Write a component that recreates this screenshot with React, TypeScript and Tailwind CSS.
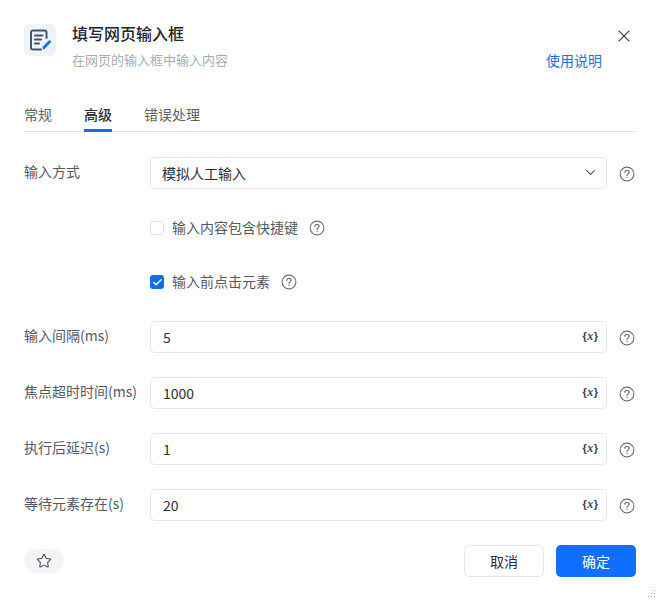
import { ChevronDown, Check, X, Star } from "lucide-react";

function Help() {
  return (
    <svg width="16" height="16" viewBox="0 0 16 16" fill="none" stroke="#6b6f76" className="shrink-0">
      <circle cx="8" cy="8" r="6.9" strokeWidth="1.1" />
      <path d="M5.9 6.3c0-1.2.9-2 2.1-2s2.1.8 2.1 1.9c0 1.6-2.1 1.7-2.1 3.3" strokeWidth="1.2" strokeLinecap="round" />
      <circle cx="8" cy="11.4" r=".7" fill="#6b6f76" stroke="none" />
    </svg>
  );
}

function VarIcon() {
  return (
    <span className="absolute right-[8px] top-0 flex h-full items-center text-[11px] font-bold text-[#3d4350] [font-family:'Liberation_Sans',sans-serif]">
      {"{"}
      <span className="px-[0.5px] italic [font-family:'Liberation_Serif',serif] text-[12px]">x</span>
      {"}"}
    </span>
  );
}

function InputRow({ label, value }: { label: string; value: string }) {
  return (
    <div className="mb-[24px] flex items-center">
      <div className="w-[126px] shrink-0 -translate-y-[2px] text-sm text-[#555a63]">{label}</div>
      <div className="relative flex h-[32px] w-[457px] items-center rounded-[5px] border border-[#e4e6ea] pb-[1px] pl-[12px] text-sm text-[#2b2f36]">
        {value}
        <VarIcon />
      </div>
      <div className="mt-[2px] ml-[12px]">
        <Help />
      </div>
    </div>
  );
}

export default function App() {
  return (
    <div className="relative h-[602px] w-[660px] overflow-hidden bg-white px-[24px] pt-[24px] [font-family:'Noto_Sans_CJK_SC','Liberation_Sans',sans-serif]">
      <div className="flex">
        <div className="flex h-[32px] w-[32px] items-center justify-center rounded-[6px] bg-[#eef4fd]">
          <svg width="26" height="26" viewBox="0 0 26 26" fill="none">
            <path d="M19.5 11V5.5a2 2 0 0 0-2-2H6a2 2 0 0 0-2 2v15a2 2 0 0 0 2 2h8" stroke="#4a5263" strokeWidth="2" strokeLinecap="round" />
            <path d="M8 8.5h7.5M8 12.5h6M8 16.5h4" stroke="#4a5263" strokeWidth="2" strokeLinecap="round" />
            <path d="M16 22.5l-.6-2.6 6-6.2a1.5 1.5 0 0 1 2.2 2.1l-5.9 6.2z" fill="#1f76e8" />
          </svg>
        </div>
        <div className="ml-[16px]">
          <div className="-mt-[2px] text-base leading-[22px] font-medium text-[#22252b]">填写网页输入框</div>
          <div className="mt-[6px] text-[13px] leading-[20px] text-[#a9adb4]">在网页的输入框中输入内容</div>
        </div>
        <div className="ml-auto flex flex-col items-end">
          <X size={20} strokeWidth={1.4} className="mt-[2px] mr-[2px] text-[#4b4f57]" />
          <a className="mt-[4px] mr-[34px] text-sm leading-[20px] text-[#1f6fdc]">使用说明</a>
        </div>
      </div>

      <div className="mt-[33px] flex h-[29px] gap-[32px] border-b border-[#e3e5e8] text-sm">
        <div className="leading-[22px] text-[#5d626b]">常规</div>
        <div className="h-[29px] border-b-[3px] border-[#0f6fe8] leading-[22px] font-medium text-[#2b2f36]">高级</div>
        <div className="leading-[22px] text-[#5d626b]">错误处理</div>
      </div>

      <div className="mt-[25px] flex items-center">
        <div className="w-[126px] shrink-0 -translate-y-[2px] text-sm text-[#555a63]">输入方式</div>
        <div className="flex h-[32px] w-[457px] items-center justify-between rounded-[5px] border border-[#e4e6ea] pr-[8px] pb-[1px] pl-[11px] text-sm text-[#2b2f36]">
          模拟人工输入
          <ChevronDown size={15} strokeWidth={1.8} className="text-[#4b4f57]" />
        </div>
        <div className="mt-[2px] ml-[12px]">
          <Help />
        </div>
      </div>

      <div className="mt-[29px] ml-[126px] flex h-[20px] items-center">
        <span className="h-[14px] w-[14px] rounded-[3px] border border-[#dfe1e5] bg-white"></span>
        <span className="ml-[8px] -translate-y-px text-sm text-[#555a63]">输入内容包含快捷键</span>
        <span className="ml-[11px]"><Help /></span>
      </div>

      <div className="mt-[34px] mb-[29px] ml-[126px] flex h-[20px] items-center">
        <span className="flex h-[14px] w-[14px] items-center justify-center rounded-[3px] bg-[#0f6fe8]">
          <Check size={11} strokeWidth={3.2} className="text-white" />
        </span>
        <span className="ml-[8px] -translate-y-px text-sm text-[#555a63]">输入前点击元素</span>
        <span className="ml-[11px]"><Help /></span>
      </div>

      <InputRow label="输入间隔(ms)" value="5" />
      <InputRow label="焦点超时时间(ms)" value="1000" />
      <InputRow label="执行后延迟(s)" value="1" />
      <InputRow label="等待元素存在(s)" value="20" />

      <div className="mt-[2px] flex items-center">
        <div className="flex h-[24px] w-[40px] items-center justify-center rounded-full bg-[#f3f4f6]">
          <Star size={16} strokeWidth={1.6} className="text-[#4b4f57]" />
        </div>
        <button className="ml-auto h-[32px] w-[80px] rounded-[5px] border border-[#e4e6ea] bg-white pb-[1px] text-sm text-[#2b2f36]">取消</button>
        <button className="ml-[12px] h-[32px] w-[80px] rounded-[5px] bg-[#0f6fff] pb-[1px] text-sm text-white">确定</button>
      </div>

      <svg width="10" height="10" viewBox="0 0 10 10" className="absolute right-[4px] bottom-[3px]" fill="#9a9ea5">
        <rect x="8" y="1" width="1" height="1" />
        <rect x="5" y="4" width="1" height="1" />
        <rect x="8" y="4" width="1" height="1" />
        <rect x="2" y="7" width="1" height="1" />
        <rect x="5" y="7" width="1" height="1" />
        <rect x="8" y="7" width="1" height="1" />
      </svg>
    </div>
  );
}
